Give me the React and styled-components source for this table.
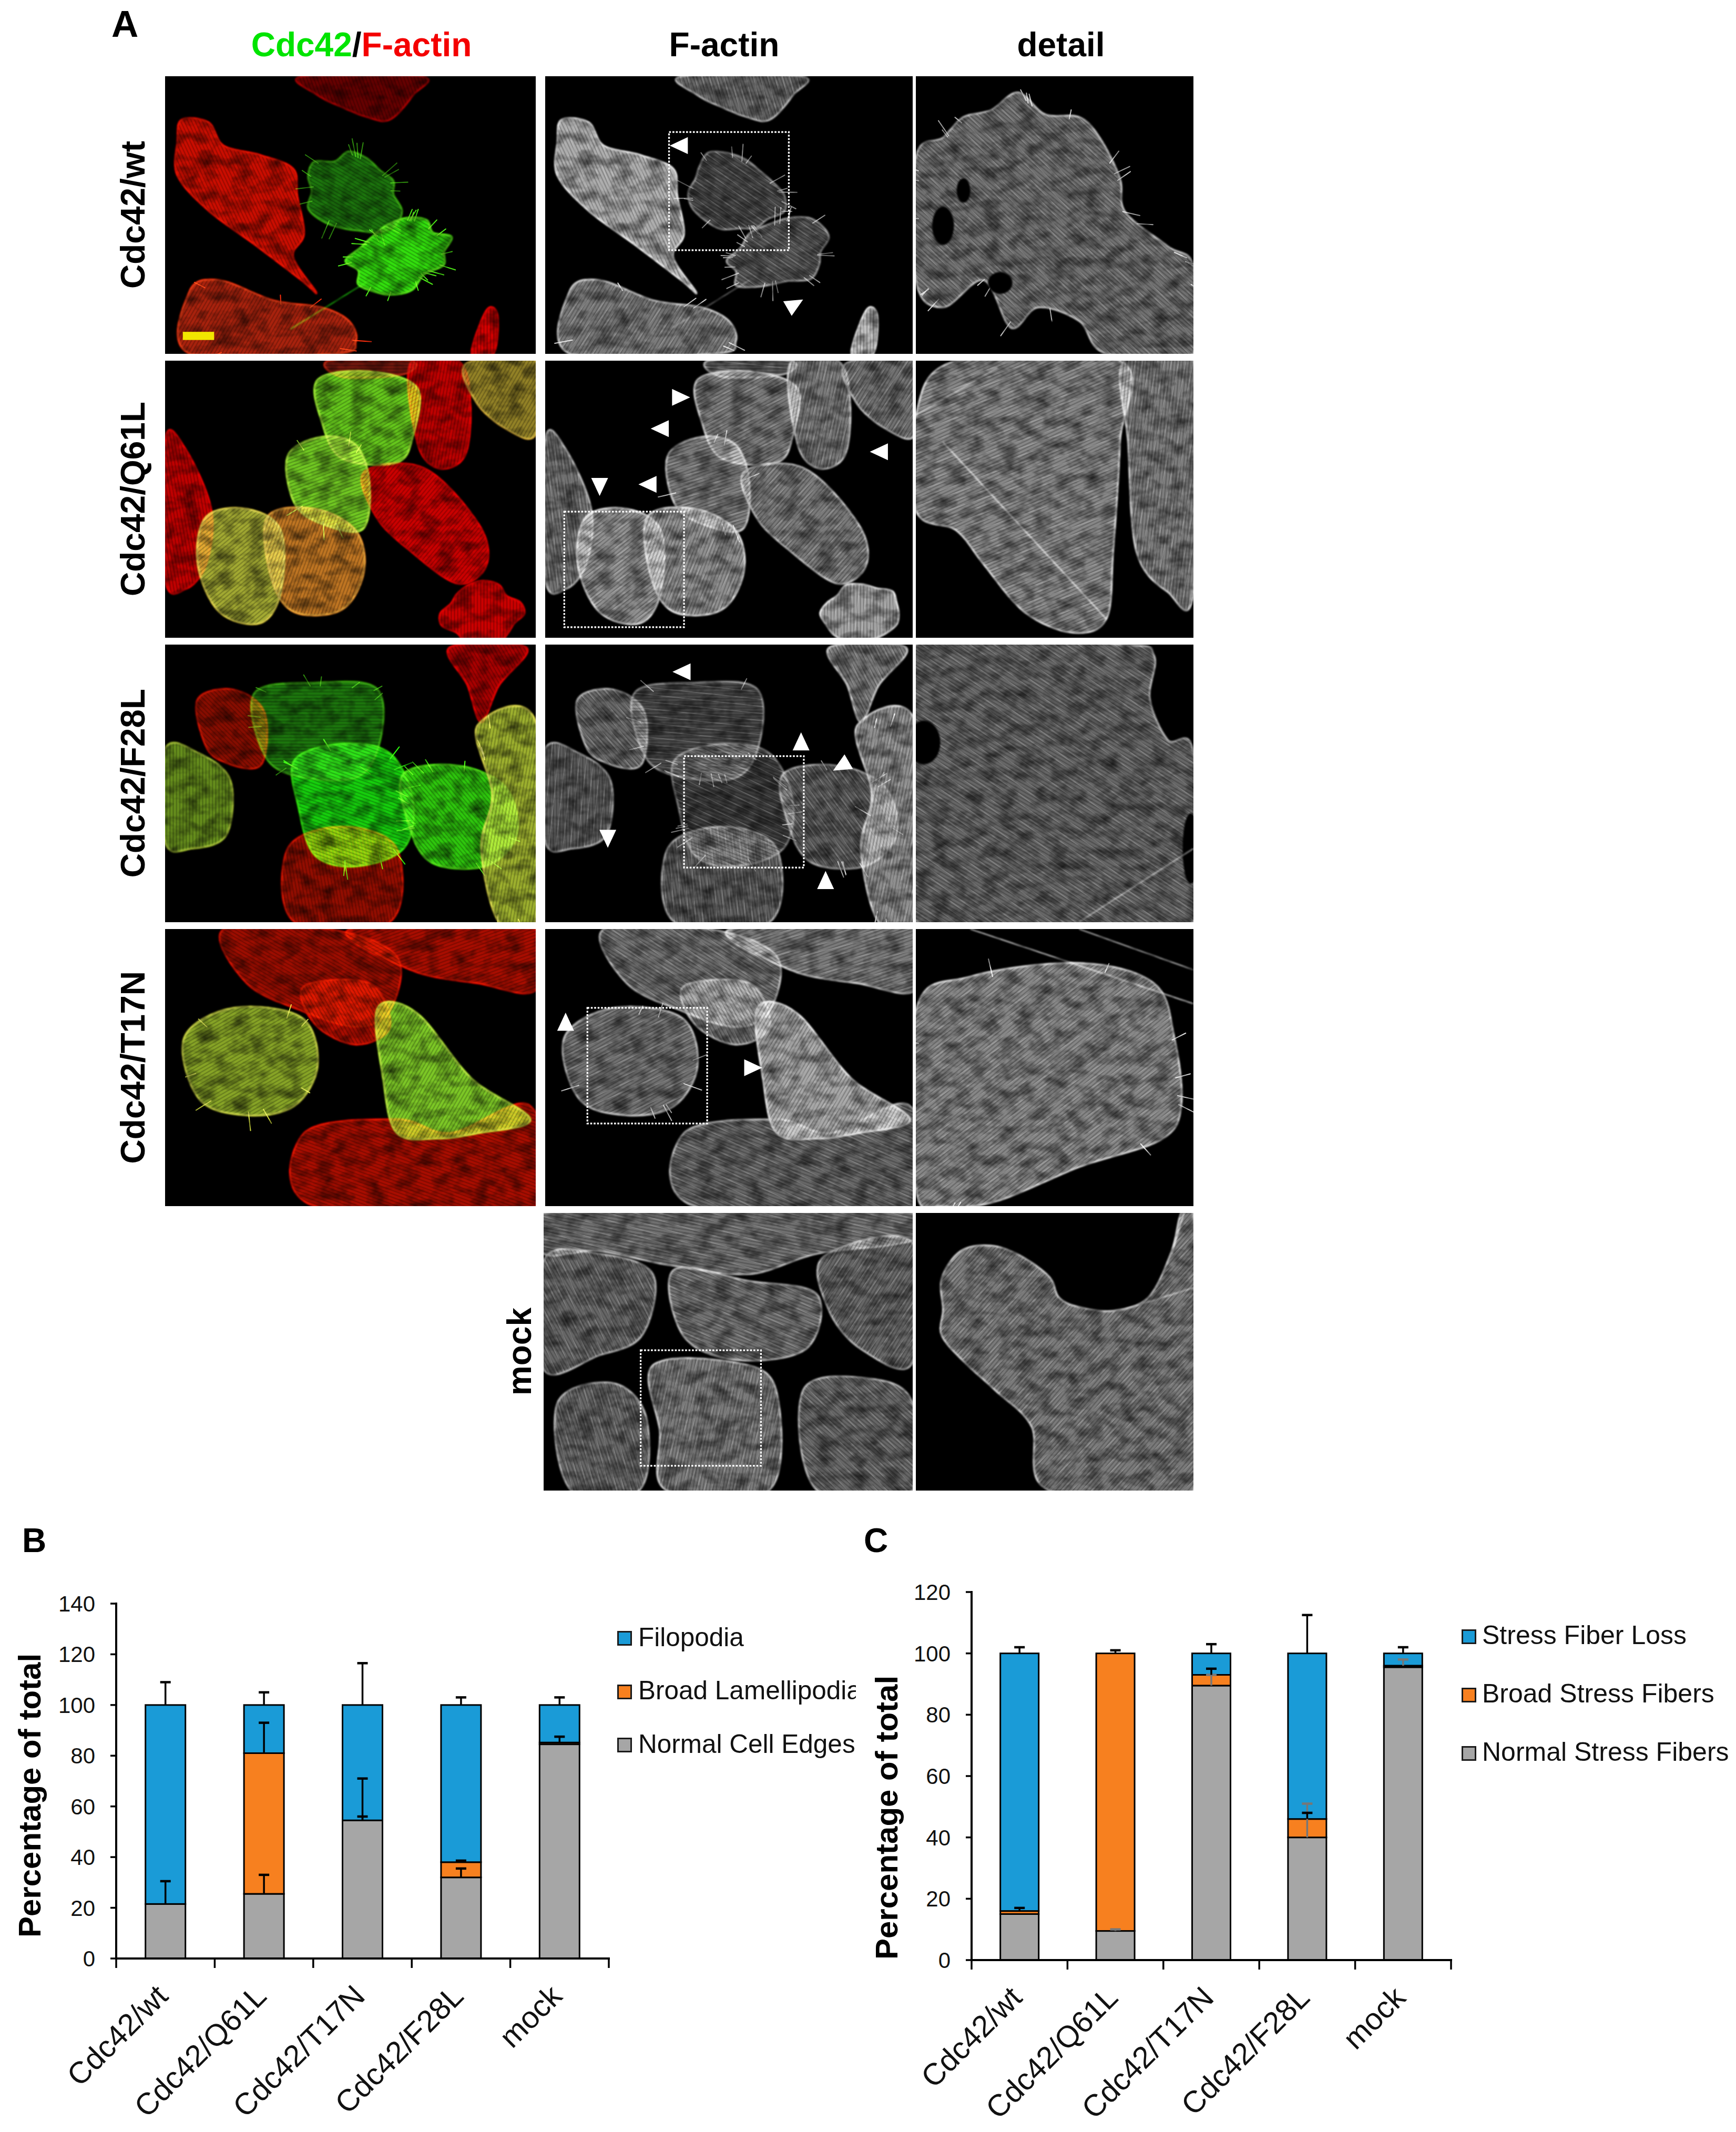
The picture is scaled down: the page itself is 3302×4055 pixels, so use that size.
import React from 'react';
import styled, { createGlobalStyle } from 'styled-components';

const FONT = `"Liberation Sans", Arial, Helvetica, sans-serif`;

const GlobalStyle = createGlobalStyle`
  html, body { margin: 0; padding: 0; background: #fff; }
  body { font-family: ${FONT}; color: #000; }
`;

/* ---------- layout ---------- */
const Page = styled.div`
  width: 3302px;
  height: 4055px;
  overflow: hidden;
  background: #fff;
  font-family: ${FONT};
`;

const FigureGrid = styled.div`
  display: grid;
  grid-template-columns: 314px 705px 717px 534px;
  grid-template-rows: 132px repeat(5, 527.5px);
  row-gap: 13px;
`;

const FigLetter = styled.div`
  font-size: ${(p) => p.$size}px;
  font-weight: 700;
  line-height: ${(p) => p.$lh}px;
  padding-top: ${(p) => p.$top}px;
  padding-left: ${(p) => p.$left}px;
`;

const ColHeader = styled.div`
  display: flex;
  justify-content: center;
  align-items: flex-start;
  padding-top: 49px;
  padding-left: ${(p) => (p.$shift || 0) * 2}px;
  font-size: 64px;
  font-weight: 700;
  line-height: 72px;
  white-space: nowrap;
`;

const Green = styled.span`
  color: #00e400;
`;
const Red = styled.span`
  color: #f40000;
`;

const LabelCell = styled.div`
  display: flex;
  align-items: center;
  justify-content: flex-end;
  padding-right: ${(p) => p.$pad}px;
`;

const VText = styled.span`
  writing-mode: vertical-rl;
  transform: rotate(180deg);
  font-size: 64px;
  font-weight: 700;
  line-height: 72px;
  white-space: nowrap;
  margin-right: ${(p) => p.$nudge || 0}px;
`;

const PanelFrame = styled.div`
  justify-self: ${(p) => (p.$end ? 'end' : 'start')};
  width: ${(p) => p.$w}px;
  height: 100%;
  background: #000;
  overflow: hidden;
`;

const PanelSvg = styled.svg`
  display: block;
  width: 100%;
  height: 100%;
  isolation: isolate;
`;

const Glow = styled.path`
  mix-blend-mode: screen;
`;
const Spike = styled.line`
  mix-blend-mode: screen;
`;

const ChartsRow = styled.div`
  display: flex;
  padding-top: 59.5px;
`;

const ChartPanel = styled.section`
  display: flex;
  flex-direction: column;
  width: ${(p) => p.$w}px;
  flex: none;
  overflow: hidden;
`;

const ChartBody = styled.div`
  display: flex;
  align-items: flex-start;
`;

const PlotSvg = styled.svg`
  display: block;
  flex: none;
`;

const Legend = styled.ul`
  list-style: none;
  margin: 0;
  padding: ${(p) => p.$top}px 0 0 0;
  display: flex;
  flex-direction: column;
  min-width: 0;
`;

const LegendItem = styled.li`
  display: flex;
  align-items: center;
  gap: ${(p) => p.$gap}px;
  height: ${(p) => p.$pitch}px;
  font-size: ${(p) => p.$fs}px;
  line-height: ${(p) => p.$pitch}px;
  white-space: nowrap;
  color: #111;
`;

const Swatch = styled.span`
  flex: none;
  box-sizing: border-box;
  width: 28px;
  height: 28px;
  border: 3px solid #1a1a1a;
  background: ${(p) => p.$c};
  transform: translateY(3px);
`;

const TickText = styled.text`
  font-family: ${FONT};
  font-size: 42px;
  fill: #111;
`;
const AxisTitle = styled.text`
  font-family: ${FONT};
  font-size: 60px;
  font-weight: 700;
  fill: #000;
`;
const CatText = styled.text`
  font-family: ${FONT};
  font-size: 58px;
  fill: #111;
`;

/* ---------- drawing helpers ---------- */
const cl = (x) => Math.round(Math.max(0, Math.min(1, x)) * 255);
const rgb = (r, g) => `rgb(${cl(r)},${cl(g)},${cl(Math.min(r, g) * 0.3)})`;
const grey = (v) => `rgb(${cl(v)},${cl(v)},${cl(v)})`;
const f1 = (n) => Math.round(n * 10) / 10;

function mulberry32(a) {
  return function () {
    a |= 0;
    a = (a + 0x6d2b79f5) | 0;
    let t = Math.imul(a ^ (a >>> 15), 1 | a);
    t = (t + Math.imul(t ^ (t >>> 7), 61 | t)) ^ t;
    return ((t ^ (t >>> 14)) >>> 0) / 4294967296;
  };
}

function ellipsePts([cx, cy, rx, ry, rot], seed, n = 16) {
  const rnd = mulberry32(seed);
  const c = Math.cos((rot * Math.PI) / 180);
  const s = Math.sin((rot * Math.PI) / 180);
  const out = [];
  for (let k = 0; k < n; k++) {
    const t = (2 * Math.PI * k) / n;
    const j = 0.82 + rnd() * 0.3;
    const x = Math.cos(t) * rx * j;
    const y = Math.sin(t) * ry * j;
    out.push([cx + x * c - y * s, cy + x * s + y * c]);
  }
  return out;
}

function smoothPath(pts) {
  const n = pts.length;
  let d = `M${f1(pts[0][0])},${f1(pts[0][1])}`;
  for (let i = 0; i < n; i++) {
    const p0 = pts[(i - 1 + n) % n];
    const p1 = pts[i];
    const p2 = pts[(i + 1) % n];
    const p3 = pts[(i + 2) % n];
    const c1 = [p1[0] + (p2[0] - p0[0]) / 6, p1[1] + (p2[1] - p0[1]) / 6];
    const c2 = [p2[0] - (p3[0] - p1[0]) / 6, p2[1] - (p3[1] - p1[1]) / 6];
    d += `C${f1(c1[0])},${f1(c1[1])} ${f1(c2[0])},${f1(c2[1])} ${f1(p2[0])},${f1(p2[1])}`;
  }
  return d + 'Z';
}

function spikeLines(pts, count, seed) {
  const rnd = mulberry32(seed);
  const n = pts.length;
  const cx = pts.reduce((s, p) => s + p[0], 0) / n;
  const cy = pts.reduce((s, p) => s + p[1], 0) / n;
  const out = [];
  for (let k = 0; k < count; k++) {
    const i = Math.floor(rnd() * n);
    const a = pts[i];
    const b = pts[(i + 1) % n];
    const t = rnd();
    const px = a[0] + (b[0] - a[0]) * t;
    const py = a[1] + (b[1] - a[1]) * t;
    let dx = px - cx;
    let dy = py - cy;
    const L = Math.hypot(dx, dy) || 1;
    dx /= L;
    dy /= L;
    const ang = (rnd() - 0.5) * 0.7;
    const rx = dx * Math.cos(ang) - dy * Math.sin(ang);
    const ry = dx * Math.sin(ang) + dy * Math.cos(ang);
    const len = 4 + rnd() * 8;
    out.push([px - rx * 2, py - ry * 2, px + rx * len, py + ry * len]);
  }
  return out;
}

function Cell({ c, mode, uid, seed }) {
  const pts = c.p || ellipsePts(c.e, seed);
  const d = smoothPath(pts);
  const v = (c.v ?? c.r ?? 0.5) * 0.8;
  const fill = mode === 'merge' ? rgb(c.r * 0.88, c.g * 0.92) : grey(v);
  const edge = mode === 'merge' ? rgb(c.r * 1.25 + 0.05, c.g * 1.2) : grey(v * 1.45 + 0.12);
  const a = c.a ?? 45;
  const sp = c.s ? spikeLines(pts, c.s, seed + 7) : [];
  return (
    <g>
      <Glow d={d} fill={fill} filter={`url(#${uid}-soft)`} />
      <path d={d} fill={`url(#${uid}-d${a})`} />
      {mode !== 'merge' && <path d={d} fill={`url(#${uid}-l${a})`} />}
      <Glow d={d} fill="none" stroke={edge} strokeWidth="1.3" filter={`url(#${uid}-glow)`} />
      {sp.map((s, i) => (
        <Spike key={i} x1={s[0]} y1={s[1]} x2={s[2]} y2={s[3]} stroke={edge} strokeWidth="0.8" strokeLinecap="round" />
      ))}
    </g>
  );
}

function Micrograph({ uid, seed = 1, w, mode, cells = [], holes = [], lines = [], box, arrows = [], scale }) {
  const angles = [...new Set(cells.map((c) => c.a ?? 45))];
  return (
    <PanelSvg viewBox={`0 0 ${w} 204`} preserveAspectRatio="none">
      <defs>
        <filter id={`${uid}-soft`} x="-10%" y="-10%" width="120%" height="120%">
          <feGaussianBlur stdDeviation="0.7" />
        </filter>
        <filter id={`${uid}-glow`} x="-10%" y="-10%" width="120%" height="120%">
          <feGaussianBlur stdDeviation="0.55" />
        </filter>
        <filter id={`${uid}-noise`} x="0%" y="0%" width="100%" height="100%">
          <feTurbulence type="fractalNoise" baseFrequency="0.08 0.12" numOctaves="3" seed={seed} />
          <feColorMatrix type="matrix" values="0 0 0 0 0  0 0 0 0 0  0 0 0 0 0  0 0 0 1.2 -0.45" />
        </filter>
        {angles.map((a) => (
          <React.Fragment key={a}>
            <pattern id={`${uid}-d${a}`} width="2.4" height="2.4" patternUnits="userSpaceOnUse" patternTransform={`rotate(${a})`}>
              <line x1="0" y1="1.2" x2="2.4" y2="1.2" stroke="#000" strokeWidth="0.8" strokeOpacity="0.24" />
            </pattern>
            <pattern id={`${uid}-l${a}`} width="6" height="5.2" patternUnits="userSpaceOnUse" patternTransform={`rotate(${a + 6})`}>
              <line x1="0" y1="2.6" x2="6" y2="2.6" stroke="#fff" strokeWidth="0.5" strokeOpacity="0.26" />
            </pattern>
          </React.Fragment>
        ))}
      </defs>
      <rect x="0" y="0" width={w} height="204" fill="#000" />
      {cells.map((c, i) => (
        <Cell key={i} c={c} mode={mode} uid={uid} seed={i * 97 + w} />
      ))}
      {holes.map(([x, y, rx, ry], i) => (
        <ellipse key={i} cx={x} cy={y} rx={rx} ry={ry} fill="#000" filter={`url(#${uid}-soft)`} />
      ))}
      {lines.map((l, i) => (
        <Spike
          key={i}
          x1={l[0]}
          y1={l[1]}
          x2={l[2]}
          y2={l[3]}
          stroke={mode === 'merge' ? rgb(l[4], l[5]) : grey(l[6] ?? l[4])}
          strokeWidth="0.9"
          filter={`url(#${uid}-glow)`}
        />
      ))}
      <rect x="0" y="0" width={w} height="204" fill="#000" filter={`url(#${uid}-noise)`} />
      {scale && <rect x="13" y="188" width="23" height="6" fill="#f2e600" />}
      {box && (
        <rect
          x={box[0]}
          y={box[1]}
          width={box[2]}
          height={box[3]}
          fill="none"
          stroke="#fff"
          strokeWidth="1.25"
          strokeDasharray="1.4 1.1"
        />
      )}
      {arrows.map(([x, y, r], i) => (
        <polygon key={i} points="0,-7.5 6.2,5.8 -6.2,5.8" fill="#fff" transform={`translate(${x},${y}) rotate(${r})`} />
      ))}
    </PanelSvg>
  );
}

/* ---------- micrograph data (coords in a 272 x 204 / 204 x 204 frame) ---------- */
const ROWS = [
  {
    label: 'Cdc42/wt',
    cells: [
      { p: [[100, 0], [188, 0], [182, 14], [165, 32], [148, 30], [128, 22], [112, 14]], r: 0.45, g: 0.02, v: 0.5, a: 70 },
      { p: [[12, 32], [32, 34], [43, 51], [70, 58], [94, 68], [97, 88], [102, 116], [94, 133], [111, 159], [100, 150], [66, 124], [32, 99], [9, 73], [9, 48]], r: 0.9, g: 0.04, v: 0.85, a: 65 },
      { e: [139, 86, 36, 28, 20], r: 0.12, g: 0.5, v: 0.36, a: 30, s: 18 },
      { e: [172, 132, 38, 24, -20], r: 0.22, g: 0.95, v: 0.42, a: 30, s: 20 },
      { p: [[18, 158], [40, 150], [80, 165], [115, 170], [135, 180], [140, 195], [125, 204], [18, 204]], r: 0.75, g: 0.15, v: 0.6, a: 120, s: 6 },
      { p: [[225, 204], [236, 172], [244, 176], [241, 204]], r: 0.95, g: 0, v: 0.95, a: 90 },
    ],
    lines: [[150, 150, 92, 186, 0.1, 0.7, 0.4]],
    box: [91, 41, 88, 87],
    arrows: [[99, 51, -90], [183, 168, 60]],
    scale: true,
    detail: {
      cells: [
        { p: [[0, 60], [20, 45], [35, 30], [55, 25], [75, 12], [95, 28], [120, 30], [135, 45], [150, 75], [154, 100], [185, 125], [204, 140], [204, 204], [140, 204], [120, 180], [90, 170], [70, 185], [50, 150], [20, 170], [0, 150]], v: 0.55, a: 40, s: 26 },
      ],
      holes: [[20, 110, 8, 14], [62, 152, 9, 8], [100, 186, 7, 6], [35, 84, 5, 9]],
      lines: [],
    },
  },
  {
    label: 'Cdc42/Q61L',
    cells: [
      { p: [[120, 0], [180, 0], [175, 10], [130, 12]], r: 0.5, g: 0.1, v: 0.45, a: 0 },
      { p: [[112, 14], [150, 8], [185, 20], [182, 55], [170, 75], [130, 72], [115, 45]], r: 0.45, g: 0.85, v: 0.6, a: 150 },
      { p: [[180, 2], [215, 0], [224, 30], [220, 70], [200, 79], [185, 60]], r: 0.85, g: 0, v: 0.6, a: 100 },
      { p: [[221, 2], [272, 0], [272, 54], [250, 50], [228, 30]], r: 0.65, g: 0.55, v: 0.55, a: 120 },
      { p: [[90, 70], [115, 56], [140, 62], [150, 90], [145, 124], [115, 120], [95, 105]], r: 0.5, g: 0.85, v: 0.6, a: 160, s: 6 },
      { p: [[146, 82], [190, 79], [230, 120], [236, 150], [215, 164], [180, 140], [155, 115]], r: 0.9, g: 0.02, v: 0.6, a: 130 },
      { p: [[0, 58], [15, 65], [34, 110], [30, 150], [15, 168], [0, 160]], r: 0.85, g: 0, v: 0.55, a: 80 },
      { p: [[30, 115], [60, 109], [85, 125], [85, 170], [70, 193], [40, 185], [24, 150]], r: 0.72, g: 0.72, v: 0.7, a: 140 },
      { p: [[75, 115], [110, 109], [140, 125], [146, 155], [130, 183], [95, 185], [78, 160]], r: 0.85, g: 0.5, v: 0.7, a: 110 },
      { e: [233, 186, 30, 22, 0], r: 0.9, g: 0.02, v: 0.8, a: 90 },
    ],
    lines: [],
    box: [14, 111, 88, 85],
    arrows: [[99, 27, 90], [85, 50, -90], [246, 67, -90], [40, 92, 180], [76, 91, -90]],
    detail: {
      cells: [
        { p: [[0, 40], [30, 0], [150, 0], [150, 60], [145, 140], [140, 190], [115, 200], [80, 185], [50, 150], [30, 125], [0, 110]], v: 0.66, a: 155 },
        { p: [[153, 0], [204, 0], [204, 170], [185, 170], [162, 140], [156, 60]], v: 0.62, a: 95 },
      ],
      holes: [],
      lines: [[20, 60, 140, 190, 0.85], [0, 40, 60, 5, 0.7]],
    },
  },
  {
    label: 'Cdc42/F28L',
    cells: [
      { p: [[209, 2], [265, 2], [245, 30], [232, 57], [222, 30]], r: 0.75, g: 0, v: 0.6, a: 60 },
      { p: [[24, 40], [50, 33], [73, 50], [70, 89], [40, 85], [28, 70]], r: 0.6, g: 0.05, v: 0.5, a: 45 },
      { p: [[0, 77], [25, 80], [48, 100], [45, 140], [20, 150], [0, 145]], r: 0.45, g: 0.6, v: 0.45, a: 90 },
      { p: [[66, 35], [110, 28], [155, 32], [158, 70], [140, 98], [90, 95], [70, 75]], r: 0.12, g: 0.5, v: 0.35, a: 0, s: 10 },
      { p: [[90, 150], [130, 134], [170, 150], [165, 204], [95, 204]], r: 0.65, g: 0.05, v: 0.45, a: 80 },
      { p: [[95, 85], [130, 73], [165, 80], [182, 115], [175, 150], [140, 163], [110, 155], [98, 120]], r: 0.1, g: 0.88, v: 0.3, a: 20, s: 12 },
      { p: [[175, 95], [215, 89], [250, 105], [258, 140], [235, 163], [195, 160], [178, 130]], r: 0.2, g: 0.85, v: 0.45, a: 50, s: 12 },
      { p: [[229, 60], [272, 57], [272, 204], [245, 204], [232, 150], [240, 110]], r: 0.7, g: 0.75, v: 0.7, a: 100, s: 6 },
    ],
    lines: [],
    box: [102, 82, 88, 82],
    arrows: [[101, 20, -90], [188, 72, 0], [218, 89, -120], [46, 142, 180], [206, 174, 0]],
    detail: {
      cells: [
        { p: [[0, 0], [150, 0], [175, 8], [172, 40], [185, 70], [204, 80], [204, 204], [0, 204]], v: 0.5, a: 30 },
      ],
      holes: [[6, 72, 12, 16], [202, 150, 6, 26], [196, 30, 14, 24]],
      lines: [[120, 204, 204, 150, 0.7]],
    },
  },
  {
    label: 'Cdc42/T17N',
    cells: [
      { p: [[136, 0], [272, 0], [272, 45], [230, 40], [180, 30]], r: 0.75, g: 0.05, v: 0.6, a: 160 },
      { p: [[43, 0], [120, 0], [170, 20], [165, 60], [140, 72], [100, 60], [60, 40]], r: 0.7, g: 0.05, v: 0.55, a: 30 },
      { p: [[102, 42], [150, 40], [165, 72], [140, 85], [110, 70]], r: 0.8, g: 0.05, v: 0.55, a: 60 },
      { p: [[102, 150], [170, 140], [210, 150], [268, 130], [272, 204], [110, 204]], r: 0.75, g: 0.05, v: 0.5, a: 20 },
      { p: [[14, 80], [50, 58], [100, 65], [112, 100], [95, 130], [60, 137], [25, 125]], r: 0.6, g: 0.7, v: 0.55, a: 150, s: 8 },
      { p: [[156, 58], [185, 62], [225, 110], [268, 140], [230, 150], [200, 154], [170, 150], [160, 110]], r: 0.55, g: 0.85, v: 0.82, a: 120 },
    ],
    lines: [],
    box: [31, 58, 88, 85],
    arrows: [[15, 69, 0], [152, 102, 90]],
    detail: {
      cells: [
        { p: [[0, 60], [40, 35], [120, 25], [175, 40], [190, 80], [195, 130], [180, 155], [120, 175], [60, 200], [20, 204], [0, 190]], v: 0.66, a: 140, s: 10 },
      ],
      holes: [],
      lines: [[40, 0, 204, 55, 0.8], [120, 0, 204, 30, 0.7]],
    },
  },
  {
    label: 'mock',
    mock: true,
    cells: [
      { p: [[0, 0], [270, 0], [270, 20], [200, 30], [150, 45], [90, 38], [40, 28], [0, 30]], v: 0.55, a: 10 },
      { p: [[0, 35], [40, 30], [80, 45], [72, 90], [40, 105], [0, 115]], v: 0.5, a: 60 },
      { p: [[95, 42], [150, 50], [200, 60], [192, 100], [140, 108], [102, 90]], v: 0.55, a: 20 },
      { p: [[205, 32], [270, 22], [270, 110], [232, 100], [208, 70]], v: 0.5, a: 120 },
      { p: [[10, 140], [50, 125], [75, 150], [70, 204], [20, 204]], v: 0.5, a: 70 },
      { p: [[80, 112], [140, 110], [170, 130], [165, 204], [90, 204], [85, 160]], v: 0.6, a: 100 },
      { p: [[190, 130], [240, 122], [270, 140], [270, 204], [200, 204]], v: 0.5, a: 40 },
    ],
    lines: [],
    box: [71, 101, 88, 85],
    arrows: [],
    detail: {
      cells: [
        { p: [[19, 48], [33, 28], [55, 24], [76, 31], [98, 47], [105, 62], [119, 69], [145, 72], [171, 62], [188, 28], [195, 0], [204, 0], [204, 204], [98, 204], [85, 157], [59, 131], [36, 110], [19, 90], [20, 71]], v: 0.6, a: 130 },
      ],
      holes: [],
      lines: [[188, 30, 197, 0, 0.9], [150, 72, 204, 55, 0.7]],
    },
  },
];

/* ---------- chart data ---------- */
const BAR = { b: '#1a9bd7', o: '#f7801f', g: '#a6a6a6' };

const CHART_B = {
  width: 1174,
  height: 1089,
  ax: 221,
  y0: 759,
  yTop: 84,
  max: 140,
  step: 20,
  catW: 187.4,
  barW: 76,
  title: [55, 449],
  data: [
    { name: 'Cdc42/wt', segs: [['g', 0, 21.5], ['b', 21.5, 100]], errs: [[100, 109], [21.5, 30.5]] },
    { name: 'Cdc42/Q61L', segs: [['g', 0, 25.5], ['o', 25.5, 81], ['b', 81, 100]], errs: [[100, 105], [81, 93], [25.5, 33]] },
    { name: 'Cdc42/T17N', segs: [['g', 0, 54.5], ['b', 54.5, 100]], errs: [[100, 116.5], [54.5, 71], [54.5, 56]] },
    { name: 'Cdc42/F28L', segs: [['g', 0, 32], ['o', 32, 38], ['b', 38, 100]], errs: [[100, 103], [38, 38.6], [32, 35.5]] },
    { name: 'mock', segs: [['g', 0, 84.5], ['o', 84.5, 85.2], ['b', 85.2, 100]], errs: [[100, 103], [85.2, 87.5]] },
  ],
  legend: ['Filopodia', 'Broad Lamellipodia', 'Normal Cell Edges'],
  legendTop: 96.6,
  pitch: 101.5,
  gap: 12,
  fs: 49.5,
};

const CHART_C = {
  width: 1152,
  height: 1089,
  ax: 220,
  y0: 762,
  yTop: 62,
  max: 120,
  step: 20,
  catW: 182.4,
  barW: 73,
  title: [57, 491],
  data: [
    { name: 'Cdc42/wt', segs: [['g', 0, 15], ['o', 15, 16], ['b', 16, 100]], errs: [[100, 102], [16, 17]] },
    { name: 'Cdc42/Q61L', segs: [['g', 0, 9.5], ['o', 9.5, 100]], errs: [[100, 101], [9.5, 10, '#777']] },
    { name: 'Cdc42/T17N', segs: [['g', 0, 89.5], ['o', 89.5, 93], ['b', 93, 100]], errs: [[100, 103], [89.5, 93, '#777'], [93, 95]] },
    { name: 'Cdc42/F28L', segs: [['g', 0, 40], ['o', 40, 46], ['b', 46, 100]], errs: [[100, 112.5], [40, 51, '#777'], [46, 48]] },
    { name: 'mock', segs: [['g', 0, 95.5], ['o', 95.5, 96], ['b', 96, 100]], errs: [[100, 102], [96, 98, '#777']] },
  ],
  legend: ['Stress Fiber Loss', 'Broad Stress Fibers', 'Normal Stress Fibers'],
  legendTop: 88.9,
  pitch: 111,
  gap: 11,
  fs: 50,
};

function StackedChart({ cfg }) {
  const { width, height, ax, y0, yTop, max, step, catW, barW, data, title } = cfg;
  const s = (y0 - yTop) / max;
  const Y = (v) => y0 - v * s;
  const ticks = [];
  for (let v = 0; v <= max; v += step) ticks.push(v);
  const xEnd = ax + catW * data.length;
  return (
    <PlotSvg width={width} height={height} viewBox={`0 0 ${width} ${height}`}>
      <AxisTitle transform={`translate(${title[0]},${title[1]}) rotate(-90)`} textAnchor="middle" dy="0.36em">
        Percentage of total
      </AxisTitle>
      {ticks.map((v) => (
        <g key={v}>
          <line x1={ax - 11} x2={ax} y1={Y(v)} y2={Y(v)} stroke="#000" strokeWidth="3.5" />
          <TickText x={ax - 40} y={Y(v) + 15} textAnchor="end">
            {v}
          </TickText>
        </g>
      ))}
      {data.map((c, i) => {
        const cx = ax + catW * (i + 0.5);
        return (
          <g key={c.name}>
            {c.segs.map(([k, a, b]) => (
              <rect key={k + a} x={cx - barW / 2} y={Y(b)} width={barW} height={Y(a) - Y(b)} fill={BAR[k]} stroke="#000" strokeWidth="3" />
            ))}
            {c.errs.map(([a, b, col = '#000'], j) => (
              <g key={j} stroke={col}>
                <line x1={cx} x2={cx} y1={Y(a)} y2={Y(b)} strokeWidth="3.5" />
                <line x1={cx - 10} x2={cx + 10} y1={Y(b)} y2={Y(b)} strokeWidth="4.5" />
              </g>
            ))}
            <CatText transform={`translate(${cx + 8},${y0 + 75}) rotate(-45)`} textAnchor="end">
              {c.name}
            </CatText>
          </g>
        );
      })}
      <line x1={ax} x2={ax} y1={yTop - 2} y2={y0 + 2} stroke="#000" strokeWidth="4" />
      <line x1={ax - 2} x2={xEnd + 2} y1={y0} y2={y0} stroke="#000" strokeWidth="4" />
      {Array.from({ length: data.length + 1 }, (_, i) => (
        <line key={i} x1={ax + catW * i} x2={ax + catW * i} y1={y0} y2={y0 + 18} stroke="#000" strokeWidth="3.5" />
      ))}
    </PlotSvg>
  );
}

function ChartLegend({ cfg }) {
  const cols = [BAR.b, BAR.o, BAR.g];
  return (
    <Legend $top={cfg.legendTop}>
      {cfg.legend.map((t, i) => (
        <LegendItem key={t} $pitch={cfg.pitch} $gap={cfg.gap} $fs={cfg.fs}>
          <Swatch $c={cols[i]} />
          {t}
        </LegendItem>
      ))}
    </Legend>
  );
}

export default function App() {
  return (
    <Page>
      <GlobalStyle />
      <FigureGrid>
        <FigLetter $size={71} $lh={80} $top={6} $left={212}>
          A
        </FigLetter>
        <ColHeader $shift={21}>
          <Green>Cdc42</Green>/<Red>F-actin</Red>
        </ColHeader>
        <ColHeader>F-actin</ColHeader>
        <ColHeader $shift={15}>detail</ColHeader>
        {ROWS.map((row, i) => (
          <React.Fragment key={row.label}>
            {row.mock ? (
              <>
                <div />
                <LabelCell $pad={0}>
                  <VText $nudge={-5}>{row.label}</VText>
                </LabelCell>
              </>
            ) : (
              <>
                <LabelCell $pad={25}>
                  <VText>{row.label}</VText>
                </LabelCell>
                <PanelFrame $w={705}>
                  <Micrograph uid={`r${i}m`} seed={i * 3 + 1} w={272} mode="merge" cells={row.cells} lines={row.lines} scale={row.scale} />
                </PanelFrame>
              </>
            )}
            <PanelFrame $w={row.mock ? 702 : 699} $end>
              <Micrograph uid={`r${i}g`} seed={i * 3 + 1} w={270} mode="gray" cells={row.cells} lines={row.lines} box={row.box} arrows={row.arrows} />
            </PanelFrame>
            <PanelFrame $w={528} $end>
              <Micrograph uid={`r${i}d`} seed={i * 3 + 2} w={204} mode="gray" cells={row.detail.cells} holes={row.detail.holes} lines={row.detail.lines} />
            </PanelFrame>
          </React.Fragment>
        ))}
      </FigureGrid>
      <ChartsRow>
        <ChartPanel $w={1628}>
          <FigLetter $size={64} $lh={72} $top={0} $left={42}>
            B
          </FigLetter>
          <ChartBody>
            <StackedChart cfg={CHART_B} />
            <ChartLegend cfg={CHART_B} />
          </ChartBody>
        </ChartPanel>
        <ChartPanel $w={1674}>
          <FigLetter $size={64} $lh={72} $top={0} $left={15}>
            C
          </FigLetter>
          <ChartBody>
            <StackedChart cfg={CHART_C} />
            <ChartLegend cfg={CHART_C} />
          </ChartBody>
        </ChartPanel>
      </ChartsRow>
    </Page>
  );
}
